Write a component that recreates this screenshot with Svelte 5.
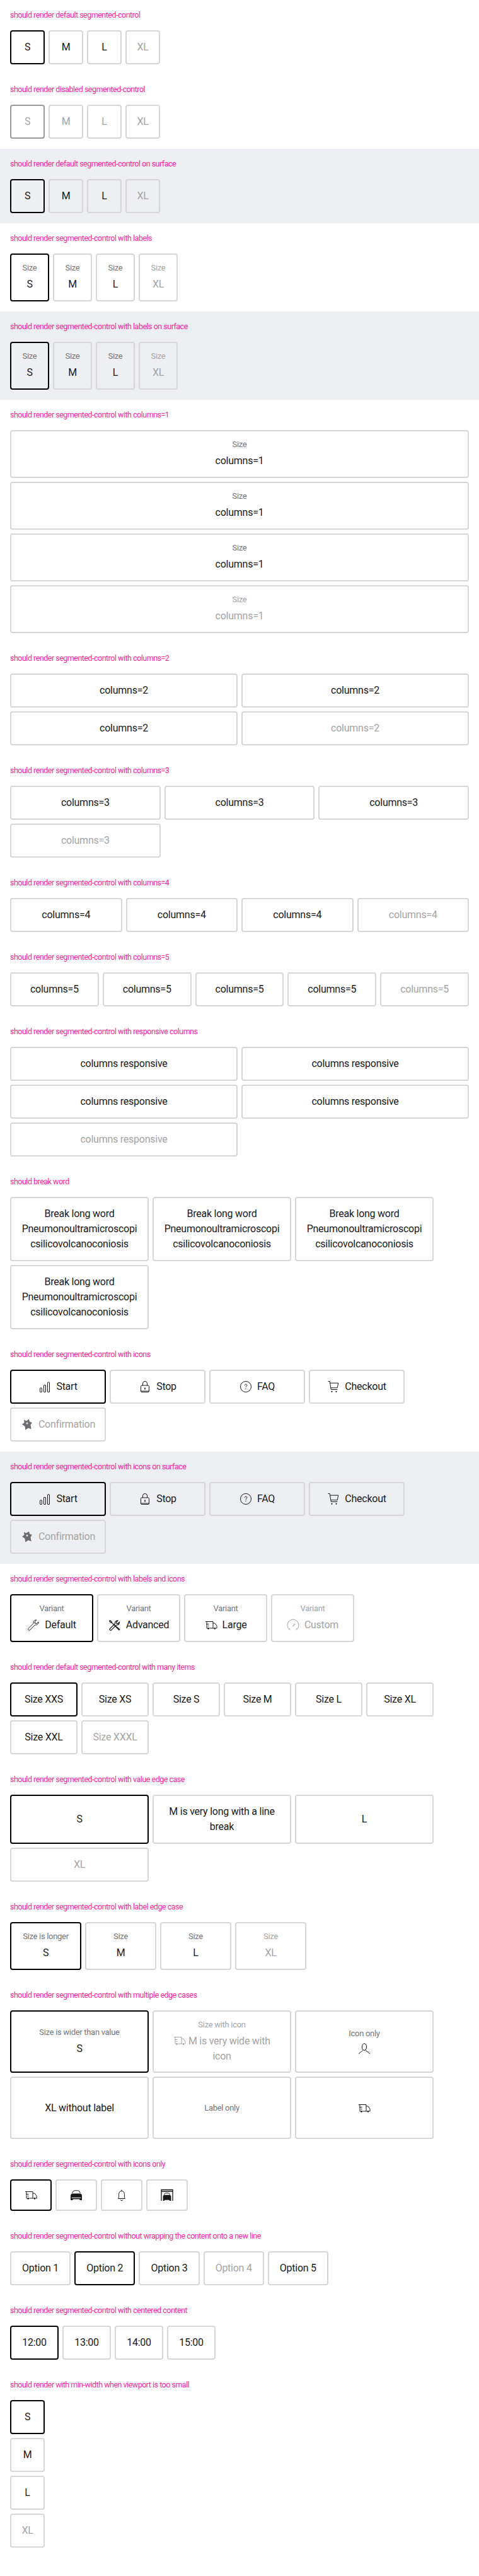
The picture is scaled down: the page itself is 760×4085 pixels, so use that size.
<script>
  const it = (value, opts = {}) => ({ value, ...opts });

  const sizes = (dis = false) => [
    it('S', { sel: true, dis }),
    it('M', { dis }),
    it('L', { dis }),
    it('XL', { dis: true })
  ];
  const labelled = () =>
    sizes().map((s) => ({ ...s, label: 'Size' }));
  const repeated = (value, n, label) =>
    Array.from({ length: n }, (_, i) =>
      it(value, { label, dis: i === n - 1 })
    );
  const iconItems = () => [
    it('Start', { icon: 'bars', sel: true }),
    it('Stop', { icon: 'lock' }),
    it('FAQ', { icon: 'help' }),
    it('Checkout', { icon: 'cart' }),
    it('Confirmation', { icon: 'badge', dis: true })
  ];
  // zero width space: the word has to break right after "microscopi"
  const longWord = 'Break long word Pneumonoultramicroscopi\u200bcsilicovolcanoconiosis';

  const sections = [
    { title: 'should render default segmented-control', cols: 'repeat(4, 55px)', items: sizes() },
    { title: 'should render disabled segmented-control', cols: 'repeat(4, 55px)', items: sizes(true) },
    { title: 'should render default segmented-control on surface', cols: 'repeat(4, 55px)', items: sizes(), surface: true },
    { title: 'should render segmented-control with labels', cols: 'repeat(4, 62px)', items: labelled() },
    { title: 'should render segmented-control with labels on surface', cols: 'repeat(4, 62px)', items: labelled(), surface: true },
    { title: 'should render segmented-control with columns=1', cols: '1fr', items: repeated('columns=1', 4, 'Size') },
    { title: 'should render segmented-control with columns=2', cols: 'repeat(2, 1fr)', items: repeated('columns=2', 4) },
    { title: 'should render segmented-control with columns=3', cols: 'repeat(3, 1fr)', items: repeated('columns=3', 4) },
    { title: 'should render segmented-control with columns=4', cols: 'repeat(4, 1fr)', items: repeated('columns=4', 4) },
    { title: 'should render segmented-control with columns=5', cols: 'repeat(5, 1fr)', items: repeated('columns=5', 5) },
    { title: 'should render segmented-control with responsive columns', cols: 'repeat(2, 1fr)', items: repeated('columns responsive', 5) },
    {
      title: 'should break word',
      cols: 'repeat(3, 220px)',
      items: [it(longWord), it(longWord), it(longWord), it(longWord)]
    },
    { title: 'should render segmented-control with icons', cols: 'repeat(4, 152px)', items: iconItems() },
    { title: 'should render segmented-control with icons on surface', cols: 'repeat(4, 152px)', items: iconItems(), surface: true },
    {
      title: 'should render segmented-control with labels and icons',
      cols: 'repeat(4, 132px)',
      items: [
        it('Default', { label: 'Variant', icon: 'wrench', sel: true }),
        it('Advanced', { label: 'Variant', icon: 'tools' }),
        it('Large', { label: 'Variant', icon: 'truck' }),
        it('Custom', { label: 'Variant', icon: 'gauge', dis: true })
      ]
    },
    {
      title: 'should render default segmented-control with many items',
      cols: 'repeat(6, 107px)',
      items: [
        it('Size XXS', { sel: true }),
        it('Size XS'),
        it('Size S'),
        it('Size M'),
        it('Size L'),
        it('Size XL'),
        it('Size XXL'),
        it('Size XXXL', { dis: true })
      ]
    },
    {
      title: 'should render segmented-control with value edge case',
      cols: 'repeat(3, 220px)',
      items: [
        it('S', { sel: true }),
        it('M is very long with a line break'),
        it('L'),
        it('XL', { dis: true })
      ]
    },
    {
      title: 'should render segmented-control with label edge case',
      cols: 'repeat(4, 113px)',
      items: [
        it('S', { label: 'Size is longer', sel: true }),
        it('M', { label: 'Size' }),
        it('L', { label: 'Size' }),
        it('XL', { label: 'Size', dis: true })
      ]
    },
    {
      title: 'should render segmented-control with multiple edge cases',
      cols: 'repeat(3, 220px)',
      rows: '99px',
      items: [
        it('S', { label: 'Size is wider than value', sel: true }),
        it('M is very wide with icon', { label: 'Size with icon', icon: 'truck', dis: true, inline: true }),
        it('', { label: 'Icon only', icon: 'person' }),
        it('XL without label'),
        it('', { label: 'Label only' }),
        it('', { icon: 'truck' })
      ]
    },
    {
      title: 'should render segmented-control with icons only',
      cols: 'repeat(4, 66px)',
      items: [
        it('', { icon: 'truck', sel: true }),
        it('', { icon: 'car' }),
        it('', { icon: 'bell' }),
        it('', { icon: 'garage' })
      ]
    },
    {
      title: 'should render segmented-control without wrapping the content onto a new line',
      cols: 'repeat(5, 96.2px)',
      items: [
        it('Option 1'),
        it('Option 2', { sel: true }),
        it('Option 3'),
        it('Option 4', { dis: true }),
        it('Option 5')
      ]
    },
    {
      title: 'should render segmented-control with centered content',
      cols: 'repeat(4, 77px)',
      items: [it('12:00', { sel: true }), it('13:00'), it('14:00'), it('15:00')]
    },
    { title: 'should render with min-width when viewport is too small', cols: '55px', items: sizes() }
  ];
</script>

{#snippet icon(name)}
  <svg class="icon" viewBox="0 0 20 20" fill="none" stroke="currentColor" stroke-width="1">
    {#if name === 'bars'}
      <rect x="2.5" y="12" width="3" height="6.5" rx=".5" />
      <rect x="8.5" y="7.5" width="3" height="11" rx=".5" />
      <rect x="14.5" y="3" width="3" height="15.5" rx=".5" />
    {:else if name === 'lock'}
      <rect x="3.5" y="8" width="13" height="10.5" rx="1.5" />
      <path d="M6.5 8V5a3.5 3.5 0 0 1 7 0v3" />
      <path d="M3.5 17h13" stroke-width="1.6" opacity=".6" />
      <rect x="9.2" y="11.5" width="1.6" height="3" fill="currentColor" stroke="none" />
    {:else if name === 'help'}
      <circle cx="10" cy="10" r="8.5" />
      <path d="M8.2 7.8a1.8 1.8 0 1 1 2.8 1.6c-.7.5-1 .9-1 1.8" />
      <circle cx="10" cy="13.4" r=".7" fill="currentColor" stroke="none" />
    {:else if name === 'cart'}
      <path d="M1.5 1.5h2.6l2.2 13h10" />
      <path d="M4.6 4.2h13.2l-1.6 7.6H5.8" />
      <circle cx="7.5" cy="17.8" r="1.1" fill="currentColor" stroke="none" />
      <circle cx="14.5" cy="17.8" r="1.1" fill="currentColor" stroke="none" />
    {:else if name === 'badge'}
      <path
        d="M5 2.5l3.6 1.7L13 1.5l1 4 3.8 1.6-2.4 3.6 1.4 6.6-5-1.9-4.6 3-.6-5.4L2 9.5l3.5-2.3z"
        fill="#6b6b70"
        stroke="none"
      />
      <circle cx="10" cy="8" r="1.6" fill="#fff" stroke="none" opacity=".8" />
    {:else if name === 'wrench'}
      <path d="M1.8 15.6l8.4-8.4c-.7-2.8 1.5-5.7 4.8-5.2l-2.7 2.8.4 2.4 2.4.4 2.8-2.7c.5 3.3-2.4 5.5-5.2 4.8l-8.4 8.4c-1.2 1.1-3.6-1.2-2.5-2.5z" />
    {:else if name === 'tools'}
      <path d="M16.8 17.8L5.5 6.5 4.7 4.2 2.4 2.7l-.7.7 1.5 2.3 2.3.8L17.8 16.8z" stroke-width="1.2" />
      <path d="M2.2 16l8.3-8.3c-.6-2.5 1.4-5 4.4-4.7l-2.3 2.4.4 2 2 .4 2.4-2.3c.3 3-2.2 5-4.7 4.4L4.4 18.2c-1 1-3.2-1.1-2.2-2.2z" stroke-width="1.2" />
    {:else if name === 'truck'}
      <path d="M1 4.5h12v10.5H7.4M3 4.5V15h1M13 7h2.8l3.2 4.2V15h-1.2M13 15h1.4M2.5 8.5h4M4.5 11.5h2" />
      <circle cx="5.6" cy="15.4" r="1.4" fill="currentColor" stroke="none" />
      <circle cx="16" cy="15.4" r="1.4" fill="currentColor" stroke="none" />
    {:else if name === 'gauge'}
      <path d="M4.4 17.2a9 9 0 1 1 11.2 0" />
      <path d="M3.6 15.5l1.4 1.7M16.4 15.5l-1.4 1.7M9.4 12.2l3.8-4.2" stroke-width="1.2" />
    {:else if name === 'person'}
      <ellipse cx="10" cy="7" rx="3.6" ry="5.4" />
      <path d="M8 11.5c0 2.6-5.4 3.6-6.5 6.5M12 11.5c0 2.6 5.4 3.6 6.5 6.5" />
    {:else if name === 'car'}
      <path d="M3.6 7l1.4-3c1-1.7 9-1.7 10 0l1.4 3" stroke-width="1" />
      <path
        d="M1 11c0-2 1.4-3 3-3.4h12c1.6.4 3 1.4 3 3.4v7h-3.5v-1.5h-11V18H1z"
        fill="currentColor"
        stroke="none"
      />
      <path d="M2.6 14.2h14.8" stroke="#fff" stroke-width="1" />
    {:else if name === 'bell'}
      <path d="M10 1.5v2M4.6 15.5c1-1.5 1-3.5 1-7 0-3 2-5 4.4-5s4.4 2 4.4 5c0 3.5 0 5.5 1 7z" />
      <path d="M8.2 17.4c.4 1.5 3.2 1.5 3.6 0" />
    {:else if name === 'garage'}
      <path d="M1 19V1.5h18V19M1 4h18" stroke-width="1.3" />
      <path d="M5.4 9.5l.9-2c.7-1.1 6.7-1.1 7.4 0l.9 2" />
      <path d="M3.6 12c0-1.3 1-2 2.2-2.3h8.4c1.2.3 2.2 1 2.2 2.3v7h-2.4v-1.2H6V19H3.6z" fill="currentColor" stroke="none" />
    {/if}
  </svg>
{/snippet}

<div class="page">
  {#each sections as s}
    <section class:surface={s.surface}>
      <p class="title">{s.title}</p>
      <div
        class="control"
        style="grid-template-columns: {s.cols}; {s.rows ? `grid-auto-rows: ${s.rows};` : ''}"
      >
        {#each s.items as item}
          <button type="button" class="item" class:sel={item.sel} class:dis={item.dis}>
            {#if item.label}<span class="label">{item.label}</span>{/if}
            {#if item.inline}
              <span class="value inline">{@render icon(item.icon)} {item.value}</span>
            {:else if item.value || item.icon}
              <span class="value row">
                {#if item.icon}{@render icon(item.icon)}{/if}
                {#if item.value}<span>{item.value}</span>{/if}
              </span>
            {/if}
          </button>
        {/each}
      </div>
    </section>
  {/each}
</div>

<style>
  :global(body) {
    background: #fff;
  }

  .page {
    font-family: Roboto, sans-serif;
    padding-bottom: 1px;
  }

  section {
    padding: 16px;
  }

  .surface {
    background: #eeeff3;
  }

  .title {
    margin: 0 0 16px;
    font-size: 12.5px;
    line-height: 16px;
    letter-spacing: -0.5px;
    color: #ff1f9d;
  }

  .control {
    display: grid;
    gap: 6px;
  }

  .item {
    box-sizing: border-box;
    display: flex;
    flex-direction: column;
    align-items: center;
    justify-content: center;
    gap: 6px;
    min-width: 0;
    padding: 13px 8px;
    border: 2px solid #d7d7d7;
    border-radius: 4px;
    background: transparent;
    font-family: inherit;
    color: #191919;
  }

  .item.sel {
    border-color: #000;
  }

  .item.sel.dis {
    border-color: #9a9a9e;
  }

  .item.dis {
    color: #a4a4a4;
  }

  .label {
    font-size: 13px;
    line-height: 16px;
    letter-spacing: -0.3px;
    color: #757575;
  }

  .dis .label {
    color: #a4a4a4;
  }

  .value {
    font-size: 16px;
    line-height: 24px;
    letter-spacing: -0.25px;
    text-align: center;
    overflow-wrap: anywhere;
  }

  .inline {
    max-width: 170px;
  }

  .row {
    display: flex;
    align-items: center;
    justify-content: center;
    gap: 8px;
  }

  .icon {
    width: 20px;
    height: 20px;
    flex: none;
    vertical-align: -4px;
  }
</style>
